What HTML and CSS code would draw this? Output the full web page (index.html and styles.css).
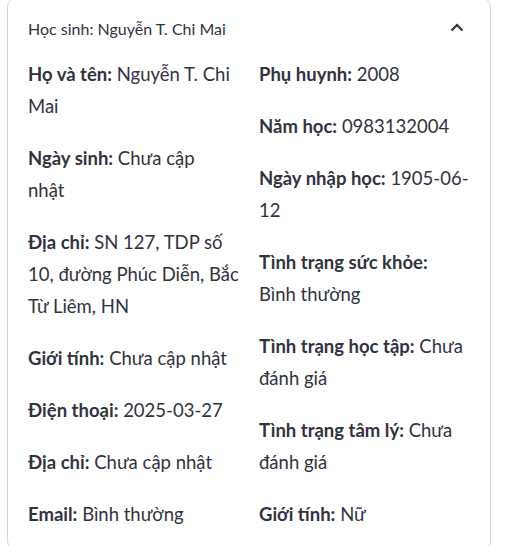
FILE: index.html
```html
<!DOCTYPE html>
<html lang="vi">
<head>
<meta charset="utf-8">
<link rel="stylesheet" href="styles.css">
</head>
<body>
<div class="expander">
  <div class="summary">
    <span class="label">Học sinh: Nguyễn T. Chi Mai</span>
    <svg class="chev" width="14" height="9" viewBox="0 0 14 9"><path d="M1.5 7.5 L7 2 L12.5 7.5" fill="none" stroke="#31333f" stroke-width="2.2"/></svg>
  </div>
  <div class="content">
    <div class="col">
      <p><b>Họ và tên:</b> Nguyễn T. Chi<br>Mai</p>
      <p><b>Ngày sinh:</b> Chưa cập<br>nhật</p>
      <p><b>Địa chỉ:</b> SN 127, TDP số<br>10, đường Phúc Diễn, Bắc<br>Từ Liêm, HN</p>
      <p><b>Giới tính:</b> Chưa cập nhật</p>
      <p><b>Điện thoại:</b> 2025-03-27</p>
      <p><b>Địa chỉ:</b> Chưa cập nhật</p>
      <p><b>Email:</b> Bình thường</p>
    </div>
    <div class="col">
      <p><b>Phụ huynh:</b> 2008</p>
      <p><b>Năm học:</b> 0983132004</p>
      <p><b>Ngày nhập học:</b> 1905-06-<br>12</p>
      <p><b>Tình trạng sức khỏe:</b><br>Bình thường</p>
      <p><b>Tình trạng học tập:</b> Chưa<br>đánh giá</p>
      <p><b>Tình trạng tâm lý:</b> Chưa<br>đánh giá</p>
      <p><b>Giới tính:</b> Nữ</p>
    </div>
  </div>
</div>
</body>
</html>
```
FILE: styles.css
```css
html, body {
  margin: 0;
  padding: 0;
  background: #ffffff;
}
body {
  font-family: "Lato", "Noto Sans", sans-serif;
  color: #31333f;
}
.expander {
  margin: -3px 19px 0 7px;
  border: 1px solid rgba(49, 51, 63, 0.2);
  border-radius: 10px;
}
.summary {
  display: flex;
  align-items: center;
  justify-content: space-between;
  padding: 17px 26px 13px 20px;
  font-size: 16px;
  line-height: 28px;
}
.chev {
  display: block;
  margin-top: -3px;
}
.content {
  display: grid;
  grid-template-columns: minmax(0, 1fr) minmax(0, 1fr);
  column-gap: 20px;
  padding: 2px 20px 0 20px;
}
.col {
  min-width: 0;
}
.col p {
  margin: 0 0 20px 0;
  font-size: 18.5px;
  line-height: 32px;
  white-space: nowrap;
}
.col b {
  font-weight: 700;
}
```
